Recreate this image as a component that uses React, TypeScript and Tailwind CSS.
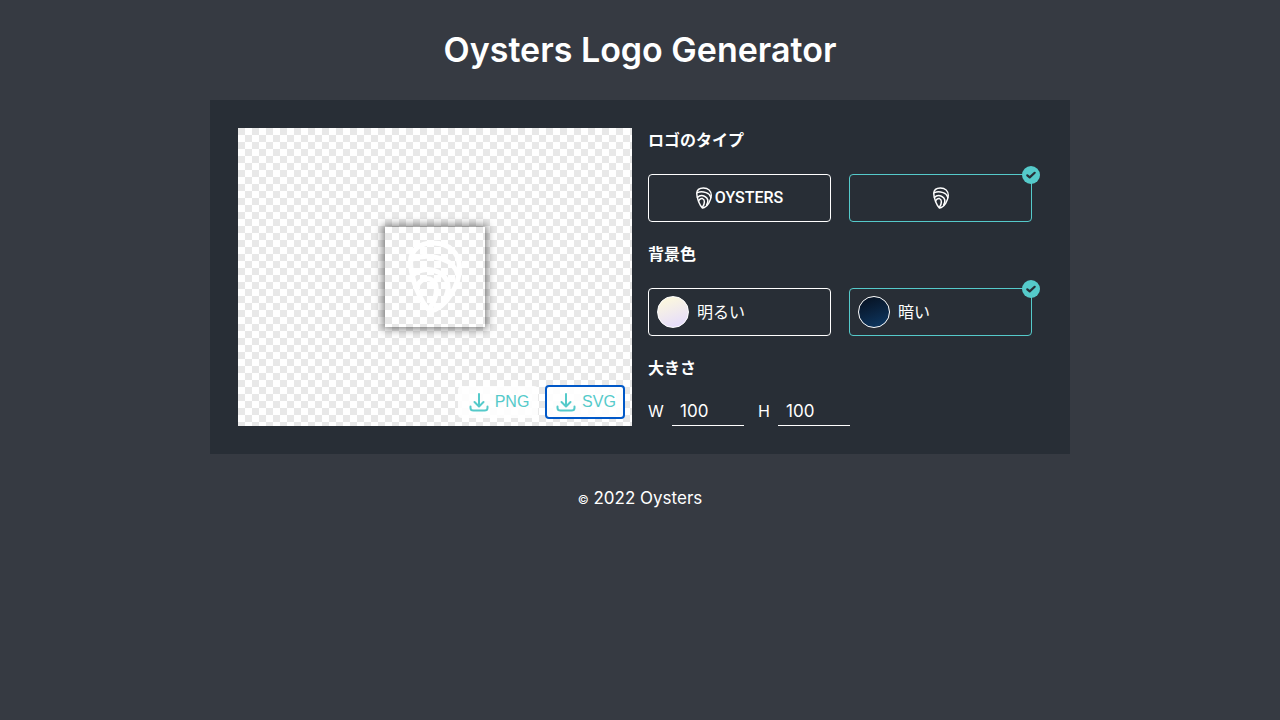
import { useState } from "react";
import type { ReactNode } from "react";

function Shell({ className }: { className?: string }) {
  return (
    <svg viewBox="0 0 54 74" fill="none" stroke="currentColor" strokeWidth="5" strokeLinecap="round" className={className} aria-hidden="true">
      <path d="M22 71C13 63 2.5 39 2.5 21C3 9 13 3 25 3C41 3 51.5 13 51.5 28C51.5 44 39 68 22 71Z" />
      <path d="M5 19C14 15 25 16 34 19C43 22 48 28 50 35" />
      <path d="M5 35C11 29 22 28 30 32C41 37 43 49 36 60" />
      <path d="M9 48C10 41 16 38 22 39C31 42 30 56 22 68" />
    </svg>
  );
}

function Check() {
  return (
    <span className="absolute -top-[9px] -right-[9px] flex size-[18px] items-center justify-center rounded-full bg-[#55caca]">
      <svg viewBox="0 0 18 18" fill="none" stroke="#282e36" strokeWidth="2.2" strokeLinecap="round" strokeLinejoin="round" className="size-[18px]" aria-hidden="true">
        <path d="M5.3 9.3 7.7 11.4 12.7 6.8" />
      </svg>
    </span>
  );
}

type OptionProps = { active: boolean; onClick: () => void; label?: string; center?: boolean; children: ReactNode };

function Option({ active, onClick, label, center, children }: OptionProps) {
  return (
    <button
      type="button"
      aria-pressed={active}
      aria-label={label}
      onClick={onClick}
      className={`relative flex h-12 items-center rounded border px-2 ${center ? "justify-center" : ""} ${active ? "border-[#55caca]" : "border-white"}`}
    >
      {children}
      {active && <Check />}
    </button>
  );
}

function Download({ name, focused }: { name: string; focused?: boolean }) {
  return (
    <button
      type="button"
      className={`flex w-20 items-center justify-center gap-1 rounded bg-white/90 font-['Liberation_Sans',sans-serif] text-[#55caca] ${focused ? "h-[34px] ring-2 ring-[#0058c8] ring-inset" : "h-8"}`}
    >
      <svg viewBox="0 0 24 24" fill="none" stroke="currentColor" strokeWidth="2" strokeLinecap="round" strokeLinejoin="round" className="size-6" aria-hidden="true">
        <path d="M12 4V15.5M7.5 12 12 16.5 16.5 12M3.5 16.5V18Q3.5 20.5 6.5 20.5H17.5Q20.5 20.5 20.5 18V16.5" />
      </svg>
      {name}
    </button>
  );
}

export default function App() {
  const [type, setType] = useState("mark");
  const [background, setBackground] = useState("dark");
  const [width, setWidth] = useState("100");
  const [height, setHeight] = useState("100");

  return (
    <div className="min-h-screen bg-[#363a42] px-4 pt-7 font-['Inter','Noto_Sans_CJK_JP',sans-serif] text-base leading-6 text-white">
      <h1 className="text-center text-[34px] leading-[44px] font-semibold">Oysters Logo Generator</h1>
      <main className="mx-auto mt-7 grid max-w-[860px] grid-cols-1 gap-4 bg-[#282e36] p-7 md:grid-cols-2">
        <section className="relative flex min-h-[298px] items-center justify-center bg-[conic-gradient(#fff_25%,#e8e8e8_0_50%,#fff_0_75%,#e8e8e8_0)] bg-[length:14px_14px]">
          <div className="flex size-[100px] items-center justify-center shadow-[0_0_8px_2px_rgba(0,0,0,0.5)]">
            <Shell className="h-[74px] w-[54px]" />
          </div>
          <div className="absolute right-[7px] bottom-[7px] flex items-center gap-[7px]">
            <Download name="PNG" />
            <Download name="SVG" focused />
          </div>
        </section>
        <section>
          <h2 className="font-bold">ロゴのタイプ</h2>
          <div className="mt-[22px] mr-[10px] grid grid-cols-2 gap-[18px]">
            <Option active={type === "full"} onClick={() => setType("full")} center>
              <Shell className="mr-[3px] h-[22px] w-4" />
              <span className="font-['Roboto',sans-serif] font-medium">OYSTERS</span>
            </Option>
            <Option active={type === "mark"} onClick={() => setType("mark")} label="Oysters" center>
              <Shell className="h-[22px] w-4" />
            </Option>
          </div>
          <h2 className="mt-5 font-bold">背景色</h2>
          <div className="mt-[22px] mr-[10px] grid grid-cols-2 gap-[18px]">
            <Option active={background === "light"} onClick={() => setBackground("light")}>
              <span className="mr-2 size-8 rounded-full border border-white bg-linear-160 from-[#fffbd9] to-[#e3d9ff]" />
              明るい
            </Option>
            <Option active={background === "dark"} onClick={() => setBackground("dark")}>
              <span className="mr-2 size-8 rounded-full border border-white bg-linear-160 from-[#06101f] to-[#0d3a66]" />
              暗い
            </Option>
          </div>
          <h2 className="mt-5 font-bold">大きさ</h2>
          <div className="mt-4 flex">
            <label htmlFor="logo-width" className="mr-2 w-4 leading-[30px]">W</label>
            <input id="logo-width" value={width} onChange={(e) => setWidth(e.target.value)} className="h-[30px] w-[72px] border-b border-white bg-transparent px-2 text-[17px] outline-none" />
            <label htmlFor="logo-height" className="mr-2 ml-[14px] w-3 leading-[30px]">H</label>
            <input id="logo-height" value={height} onChange={(e) => setHeight(e.target.value)} className="h-[30px] w-[72px] border-b border-white bg-transparent px-2 text-[17px] outline-none" />
          </div>
        </section>
      </main>
      <footer className="mt-8 text-center text-[17px]"><span className="text-xs">©</span> 2022 Oysters</footer>
    </div>
  );
}
